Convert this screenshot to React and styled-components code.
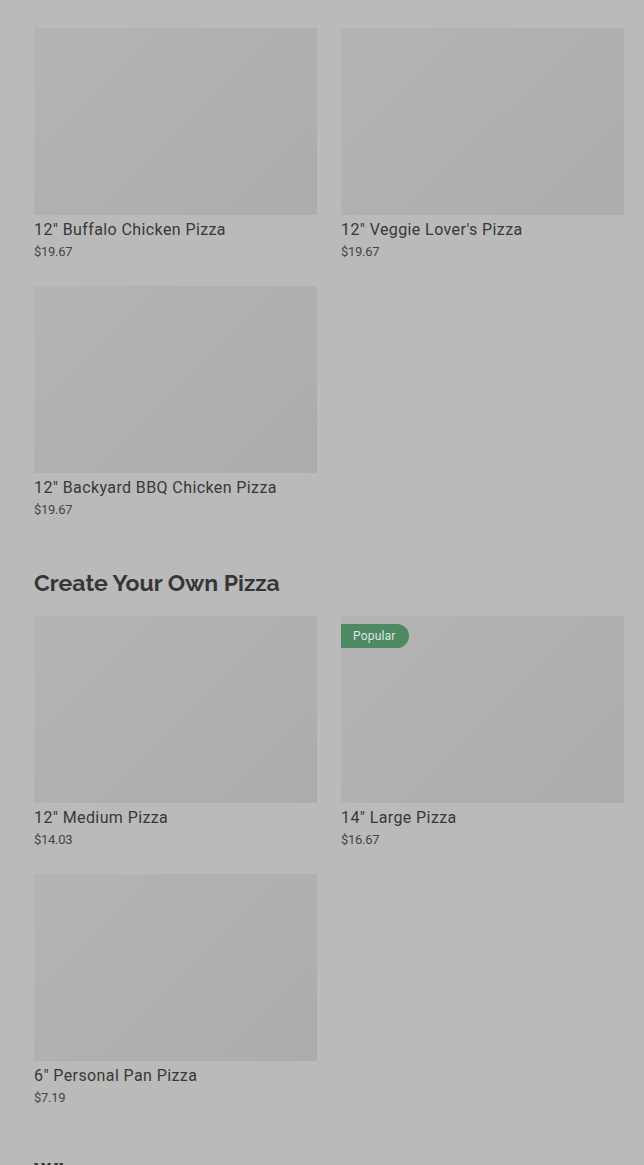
import React from 'react';
import styled, { createGlobalStyle } from 'styled-components';

const Global = createGlobalStyle`
  html, body {
    margin: 0;
    background: #bababa;
    overflow: hidden;
  }
  body {
    font-family: Roboto, "Liberation Sans", sans-serif;
  }
`;

const Page = styled.div`
  width: 644px;
  height: 1165px;
  overflow: hidden;
`;

const Main = styled.main`
  margin-top: -230px;
  padding: 0 20px 0 34px;
`;

const Section = styled.section`
  & + & {
    margin-top: 47px;
  }
`;

const Heading = styled.h2`
  margin: 0 0 17px;
  font-family: Raleway, Lato, "Open Sans", sans-serif;
  font-weight: 700;
  font-size: 23px;
  line-height: 32px;
  color: #363636;
`;

const Grid = styled.div`
  display: grid;
  grid-template-columns: 283px 283px;
  column-gap: 24px;
  row-gap: 24px;
`;

const Card = styled.div`
  display: flex;
  flex-direction: column;
`;

const Picture = styled.div`
  position: relative;
  height: 187px;
  background: linear-gradient(135deg, #b4b4b4 0%, #b0b0b0 50%, #acacac 100%);
`;

const Badge = styled.span`
  position: absolute;
  top: 8px;
  left: 0;
  height: 24px;
  padding: 0 13px 0 12px;
  border-radius: 0 12px 12px 0;
  background: #4d8963;
  color: #dfe6e2;
  font-size: 12px;
  letter-spacing: 0.2px;
  line-height: 24px;
`;

const Name = styled.div`
  margin-top: 3px;
  font-size: 16px;
  line-height: 24px;
  letter-spacing: 0.4px;
  color: #383838;
`;

const Price = styled.div`
  font-size: 13px;
  line-height: 20px;
  color: #454545;
  letter-spacing: -0.3px;
`;

const sections = [
  {
    title: null,
    items: [
      { name: '12" Pepperoni Pizza', price: '$19.67' },
      { name: '12" Cheese Pizza', price: '$19.67' },
      { name: '12" Buffalo Chicken Pizza', price: '$19.67' },
      { name: '12" Veggie Lover\'s Pizza', price: '$19.67' },
      { name: '12" Backyard BBQ Chicken Pizza', price: '$19.67' },
    ],
  },
  {
    title: 'Create Your Own Pizza',
    items: [
      { name: '12" Medium Pizza', price: '$14.03' },
      { name: '14" Large Pizza', price: '$16.67', badge: 'Popular' },
      { name: '6" Personal Pan Pizza', price: '$7.19' },
    ],
  },
  {
    title: 'Wings',
    items: [
      { name: '10 Bone-In Wings', price: '$14.99' },
      { name: '10 Boneless Wings', price: '$12.99' },
    ],
  },
];

export default function App() {
  return (
    <Page>
      <Global />
      <Main>
        {sections.map((s, i) => (
          <Section key={i}>
            {s.title && <Heading>{s.title}</Heading>}
            <Grid>
              {s.items.map((it) => (
                <Card key={it.name}>
                  <Picture>{it.badge && <Badge>{it.badge}</Badge>}</Picture>
                  <Name>{it.name}</Name>
                  <Price>{it.price}</Price>
                </Card>
              ))}
            </Grid>
          </Section>
        ))}
      </Main>
    </Page>
  );
}
